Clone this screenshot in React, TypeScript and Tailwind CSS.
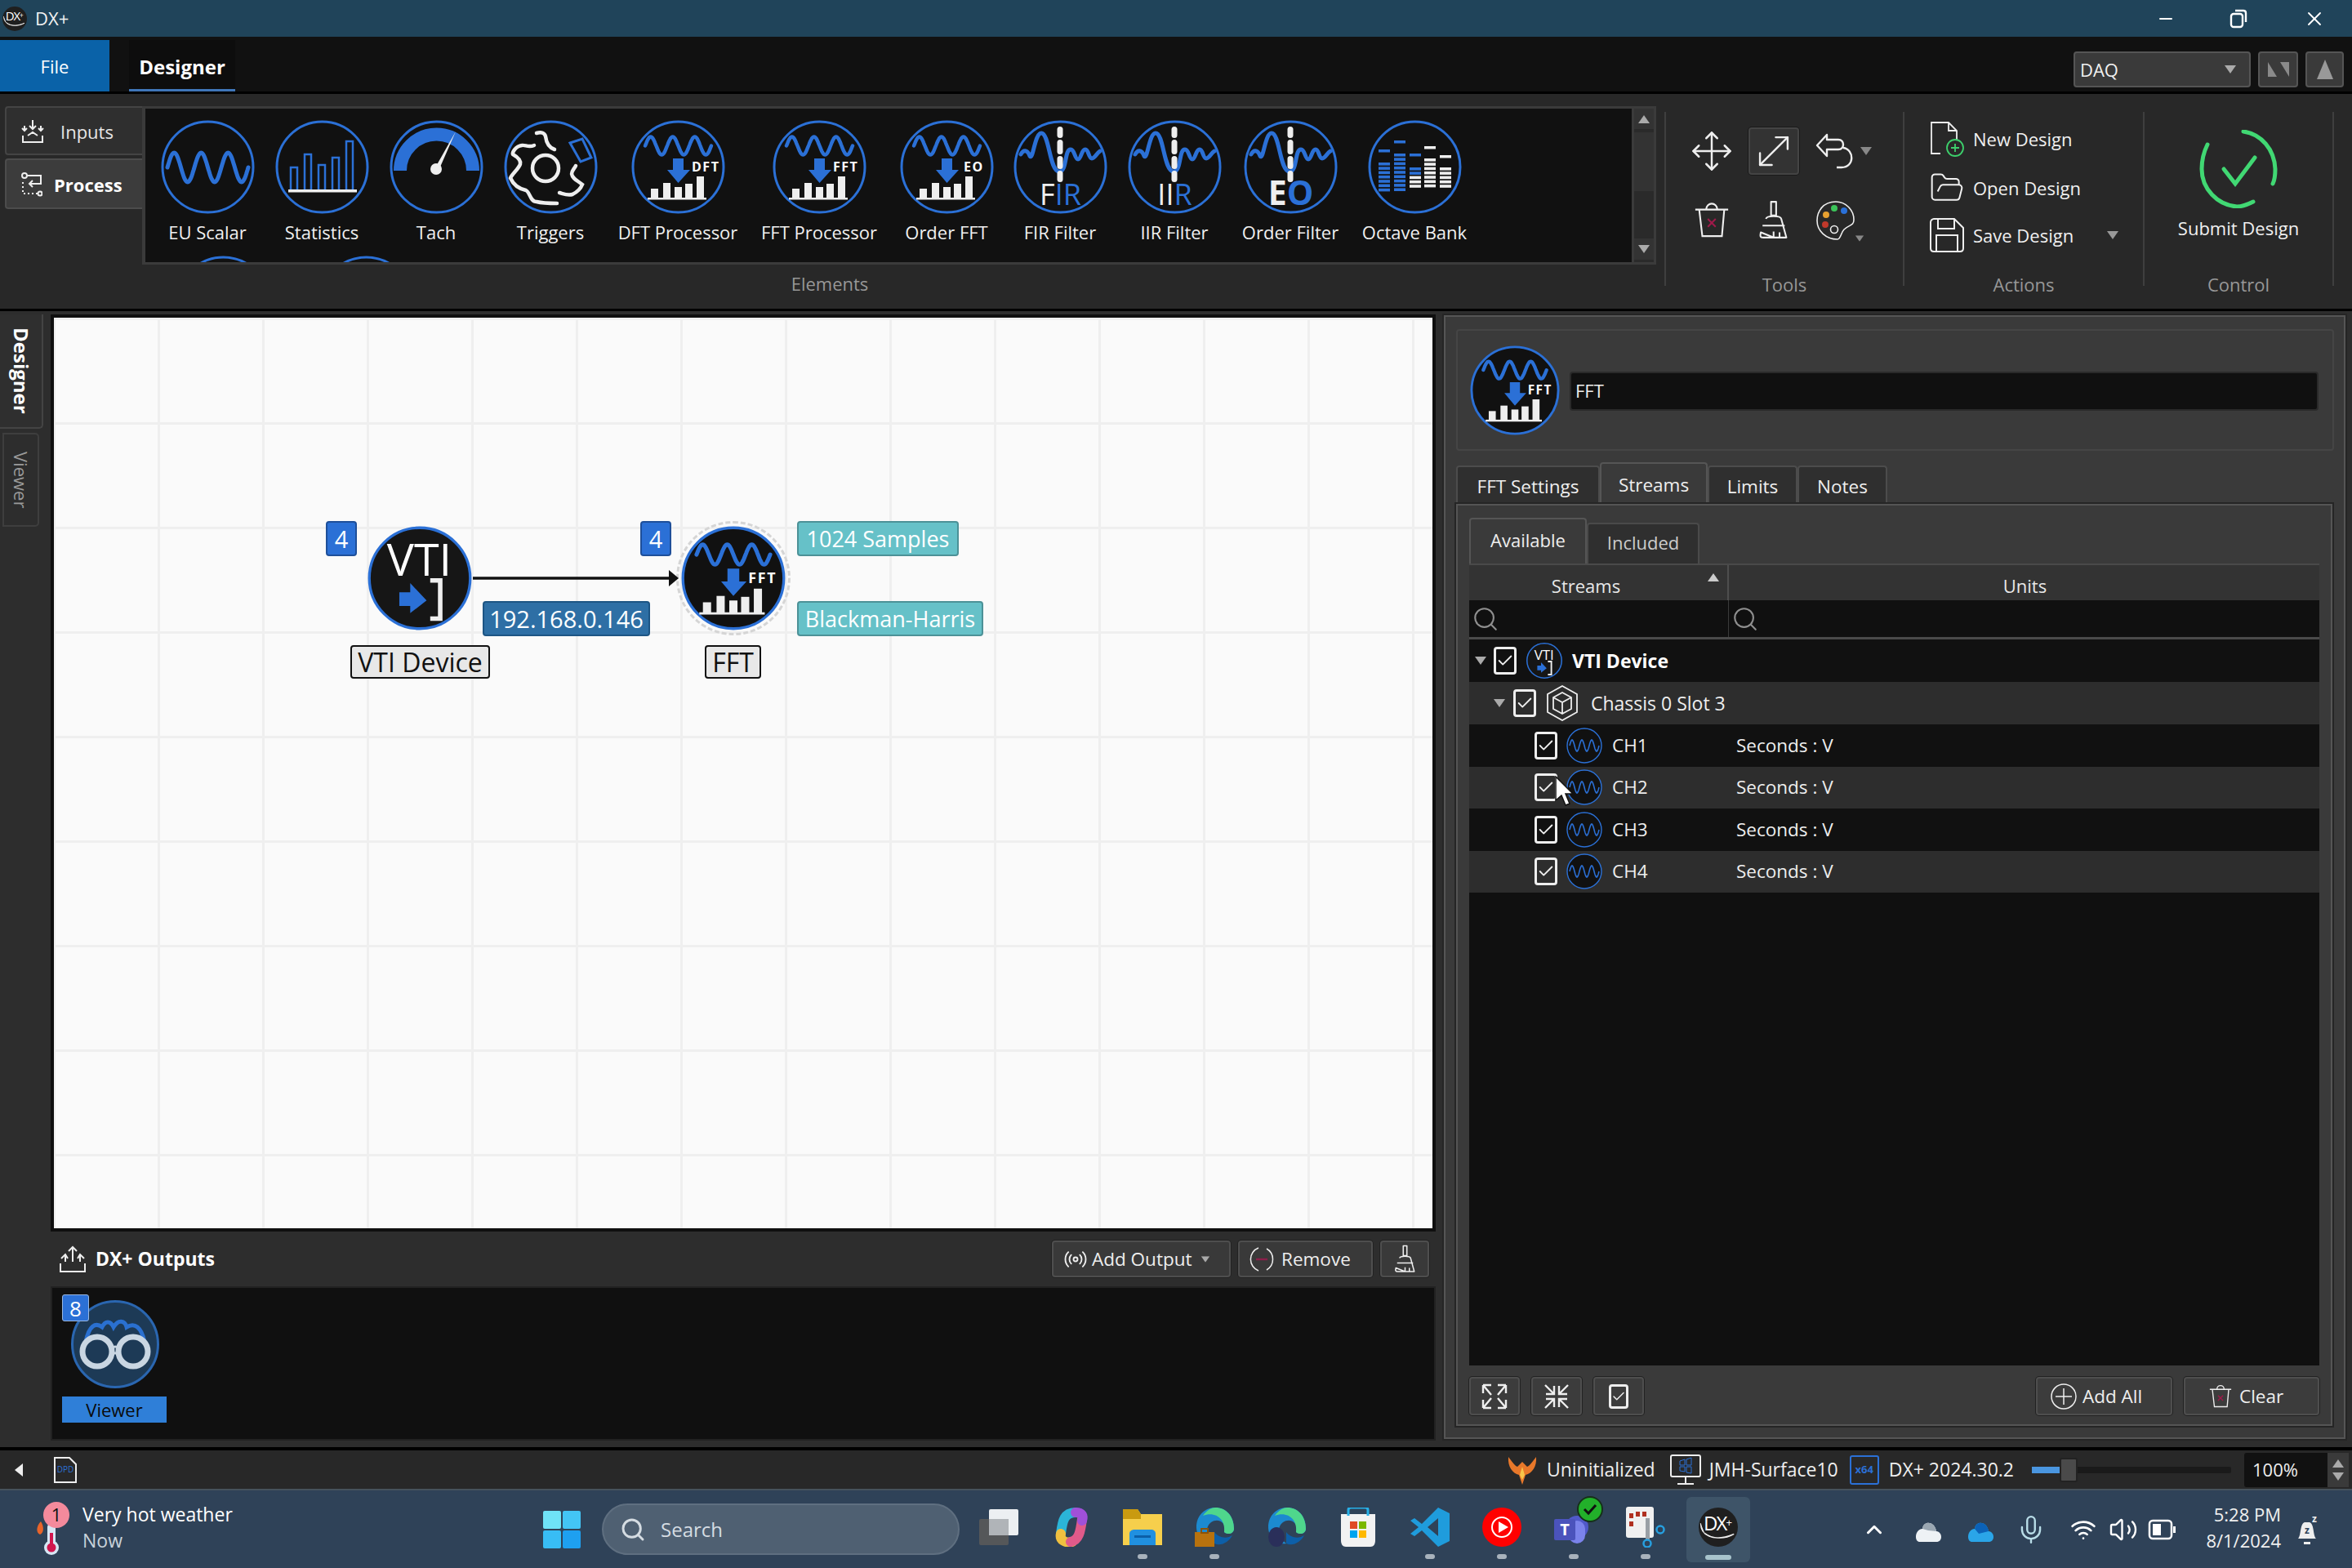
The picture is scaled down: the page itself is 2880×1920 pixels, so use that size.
import { Search, Move, MoveDiagonal, FolderOpen, ChevronUp, Mic, Wifi, Volume2, Radio, Check, X, Minus } from "lucide-react";

const BLUE = "#2b70d6";

const sine = (x0: number, x1: number, cy: number, a: number, n: number) => {
  let d = "";
  for (let i = 0; i <= 120; i++) {
    const t = i / 120;
    const x = x0 + (x1 - x0) * t;
    const y = cy - a * Math.sin(t * n * Math.PI * 2);
    d += `${i ? "L" : "M"}${x.toFixed(1)} ${y.toFixed(1)}`;
  }
  return d;
};

function Ring({ size = 115, fill = "#111", children, stroke = 3 }: { size?: number; fill?: string; stroke?: number; children?: React.ReactNode }) {
  return (
    <svg width={size} height={size} viewBox="0 0 115 115" className="shrink-0">
      <circle cx="57.5" cy="57.5" r="55.5" fill={fill} stroke={BLUE} strokeWidth={stroke} />
      {children}
    </svg>
  );
}

function ScalarIcon() {
  return (
    <Ring>
      <path d={sine(8, 107, 58, 18, 3)} fill="none" stroke={BLUE} strokeWidth="5" strokeLinecap="round" />
    </Ring>
  );
}

function StatsIcon() {
  const bars = [[19, 58], [36, 42], [53, 55], [70, 46], [87, 26]];
  return (
    <Ring>
      {bars.map(([x, y]) => (
        <rect key={x} x={x} y={y} width="8" height={86 - y} fill="none" stroke={BLUE} strokeWidth="2.5" />
      ))}
      <rect x="16" y="85" width="84" height="3.5" fill="#eee" />
    </Ring>
  );
}

function TachIcon() {
  return (
    <Ring>
      <path d="M13 62 A44.5 44.5 0 0 1 102 62" fill="none" stroke={BLUE} strokeWidth="16" />
      <path d="M55 60 L81 14 L60 62 Z" fill="#eee" />
      <circle cx="57" cy="60" r="7" fill="#eee" />
    </Ring>
  );
}

function TriggerIcon() {
  return (
    <Ring>
      <g fill="none" stroke="#eee" strokeWidth="4.5" strokeLinecap="round">
        <circle cx="51" cy="59" r="16" />
        <path d="M40 16 C46 14 50 16 51 20 C52 28 56 34 62 36" />
        <path d="M37 31 C30 34 26 30 22 31 C14 32 10 40 11 42 C18 46 21 50 20 54 C18 60 10 66 8 71 C12 80 18 84 27 86 C32 88 32 100 40 100 C48 102 56 102 65 102" />
        <path d="M68 89 C72 90 78 93 84 91 C90 88 94 84 96 79 C90 74 84 72 83 66 C83 62 86 60 88 56" />
      </g>
      <path d="M81 28 L96 23 L107 46 L94 51 Z" fill="none" stroke={BLUE} strokeWidth="3" />
    </Ring>
  );
}

function ProcIcon({ tag, size }: { tag: string; size?: number }) {
  return (
    <Ring size={size}>
      <path d={sine(17, 98, 31.5, 11, 3)} fill="none" stroke={BLUE} strokeWidth="4.5" strokeLinecap="round" />
      <path d="M51 47 H64 V61 H72 L57.5 77 L44 61 H51 Z" fill={BLUE} />
      {[[24, 84], [39, 77], [53, 82], [66, 78], [80, 69]].map(([x, y]) => (
        <rect key={x} x={x} y={y} width="9" height={96 - y} fill="#eee" />
      ))}
      <rect x="20" y="95" width="72" height="2.5" fill="#eee" />
      <text x={tag.length > 2 ? 74 : 78} y="63" fill="#fff" fontSize="16" fontWeight="700" fontFamily="Open Sans, sans-serif" letterSpacing="1.5">
        {tag}
      </text>
    </Ring>
  );
}

function FilterIcon({ tag }: { tag: "FIR" | "IIR" | "EO" }) {
  return (
    <Ring>
      <path
        d="M9 42 C12 36 17 36 20 44 C24 50 26 16 34 16 C44 16 44 63 56 63 C66 63 62 36 70 36 C75 36 75 48 79 48 C83 48 83 36 88 36 C92 36 92 47 96 47 C100 47 102 40 106 38"
        fill="none"
        stroke={BLUE}
        strokeWidth="5"
        strokeLinecap="round"
      />
      {[[8, 14], [24, 18], [44, 16], [62, 14]].map(([y, h]) => (
        <rect key={y} x="53.5" y={y} width="7" height={h} rx="3.5" fill="#eee" />
      ))}
      <text x="57.5" y="104" textAnchor="middle" fontSize={tag === "EO" ? 41 : 36} fontWeight={tag === "EO" ? 700 : 500} fontFamily="Open Sans, sans-serif">
        {tag === "FIR" && <><tspan fill="#eee">F</tspan><tspan fill={BLUE}>IR</tspan></>}
        {tag === "IIR" && <><tspan fill="#eee">II</tspan><tspan fill={BLUE}>R</tspan></>}
        {tag === "EO" && <><tspan fill="#eee">E</tspan><tspan fill={BLUE}>O</tspan></>}
      </text>
    </Ring>
  );
}

function OctaveIcon() {
  const cols = [
    { x: 13, top: 52, cap: 36, n: 7, c: BLUE, split: 99 },
    { x: 32, top: 41, cap: 25, n: 9, c: BLUE, split: 99 },
    { x: 51, top: 58, cap: 41, n: 5, c: BLUE, split: 2 },
    { x: 69, top: 47, cap: 32, n: 7, c: "#eee", split: 99 },
    { x: 88, top: 58, cap: 43, n: 5, c: "#eee", split: 99 },
  ];
  return (
    <Ring>
      {cols.map((col) => (
        <g key={col.x}>
          <rect x={col.x} y={col.cap} width="14" height="3.5" fill={col.c} />
          {Array.from({ length: col.n }, (_, i) => (
            <rect key={i} x={col.x} y={col.top + i * 5.3} width="14" height="3.6" fill={i >= col.split ? "#eee" : col.c} />
          ))}
        </g>
      ))}
    </Ring>
  );
}

function VtiIcon({ size = 128, fontSize = 50, stroke = 3 }: { size?: number; fontSize?: number; stroke?: number }) {
  return (
    <Ring size={size} fill="#161616" stroke={stroke}>
      <text x="57" y="55" textAnchor="middle" fill="#fff" fontSize={fontSize} fontWeight="400" fontFamily="Open Sans, sans-serif">VTI</text>
      <path d="M35 73 H47 V63 L65 82 L47 96 V88 H35 Z" fill={BLUE} />
      <path d="M69 60 H80 V102 H69" fill="none" stroke="#eee" strokeWidth="5" />
    </Ring>
  );
}

function Broom({ size = 48 }: { size?: number }) {
  return (
    <svg width={size * 0.75} height={size} viewBox="0 0 36 48" fill="none" stroke="#eee" strokeWidth="2">
      <path d="M15 2 H21 V18 H15 Z M9 22 C10 18 26 18 27 22 L33 44 H25 V38 M25 44 H18 V37 M18 44 H6 C2 44 2 42 3 38 Z M5 30 H31" strokeLinejoin="round" />
    </svg>
  );
}

function Trash({ size = 48 }: { size?: number }) {
  return (
    <svg width={size} height={size} viewBox="0 0 48 48" fill="none" stroke="#eee" strokeWidth="2.2">
      <path d="M3 10 H45 M8 10 L12 44 H37 L40 10 M17 10 C17 0 31 0 31 10" />
      <path d="M19 22 L29 32 M29 22 L19 32" stroke="#a01a4a" />
    </svg>
  );
}

function Box({ size = 28 }: { size?: number }) {
  return (
    <span className="flex shrink-0 items-center justify-center rounded-[4px] border-[3px] border-[#eee] bg-transparent" style={{ width: size, height: size + 6 }}>
      <Check size={size - 6} strokeWidth={2} color="#eee" />
    </span>
  );
}

function Tri({ dir = "down", className = "" }: { dir?: "down" | "up" | "left"; className?: string }) {
  const pts = dir === "down" ? "0,0 14,0 7,10" : dir === "up" ? "0,10 14,10 7,0" : "10,0 10,16 0,8";
  return (
    <svg width="14" height="10" viewBox={dir === "left" ? "0 0 10 16" : "0 0 14 10"} className={`shrink-0 ${className}`}>
      <polygon points={pts} fill="currentColor" />
    </svg>
  );
}

function Logo({ size = 30 }: { size?: number }) {
  return (
    <svg width={size} height={size} viewBox="0 0 40 40" className="shrink-0">
      <circle cx="20" cy="20" r="20" fill="#1f1f1f" />
      <text x="5" y="23" fontSize="20" letterSpacing="-1.5" fill="#fff" fontFamily="Open Sans, sans-serif">DX</text>
      <text x="28" y="19" fontSize="11" fill="#fff" fontFamily="Open Sans, sans-serif">+</text>
      <path d="M2 16 C2 28 14 36 36 27 C26 33 14 32 6 26" fill="#eee" stroke="#eee" strokeWidth="1" />
    </svg>
  );
}

const elements = [
  { label: "EU Scalar", w: "w-[140px]", icon: <ScalarIcon /> },
  { label: "Statistics", w: "w-[140px]", icon: <StatsIcon /> },
  { label: "Tach", w: "w-[140px]", icon: <TachIcon /> },
  { label: "Triggers", w: "w-[140px]", icon: <TriggerIcon /> },
  { label: "DFT Processor", w: "w-[172px]", icon: <ProcIcon tag="DFT" /> },
  { label: "FFT Processor", w: "w-[174px]", icon: <ProcIcon tag="FFT" /> },
  { label: "Order FFT", w: "w-[138px]", icon: <ProcIcon tag="EO" /> },
  { label: "FIR Filter", w: "w-[140px]", icon: <FilterIcon tag="FIR" /> },
  { label: "IIR Filter", w: "w-[140px]", icon: <FilterIcon tag="IIR" /> },
  { label: "Order Filter", w: "w-[144px]", icon: <FilterIcon tag="EO" /> },
  { label: "Octave Bank", w: "w-[160px]", icon: <OctaveIcon /> },
];

function TitleBar() {
  return (
    <div className="flex h-[45px] shrink-0 items-center bg-[#20445a] pl-[3px] text-[22px] text-[#f2f2f2]">
      <Logo />
      <span className="ml-[10px]">DX+</span>
      <div className="ml-auto flex items-center pr-[32px] text-white">
        <Minus size={24} strokeWidth={2} />
        <svg className="ml-[66px]" width="22" height="24" viewBox="0 0 22 24" fill="none" stroke="#fff" strokeWidth="2.4">
          <rect x="2" y="6" width="14" height="16" rx="3" />
          <path d="M7 2 H17 C19 2 20 3 20 5 V16" />
        </svg>
        <X className="ml-[68px]" size={28} strokeWidth={1.6} />
      </div>
    </div>
  );
}

function MenuBar() {
  return (
    <div className="flex h-[70px] shrink-0 border-b-[3px] border-black bg-[#111] text-[22px]">
      <div className="mt-[4px] flex w-[134px] items-center justify-center bg-[#0a62a8] pt-[2px] text-white">File</div>
      <div className="ml-[24px] mt-[4px] flex w-[130px] items-center justify-center border-b-[3px] border-[#3f76b8] bg-[#0d0d0d] pt-[5px] text-[24px] font-bold text-white">Designer</div>
      <div className="ml-auto flex items-start pt-[18px]">
        <div className="flex h-[44px] w-[217px] items-center justify-between rounded-[4px] border-2 border-[#555] bg-[#3a3a3a] pl-[6px] pr-[16px] text-[#f0f0f0]">
          DAQ
          <Tri className="text-[#aaa]" />
        </div>
        <div className="ml-[9px] flex h-[44px] w-[49px] items-center justify-center rounded-[4px] border-2 border-[#555] bg-[#3a3a3a]">
          <svg width="26" height="18" viewBox="0 0 26 18"><path d="M0 0 L11 18 H0 Z M26 0 L15 0 L26 18 Z" fill="#8a8a8a" /></svg>
        </div>
        <div className="ml-[9px] mr-[10px] flex h-[44px] w-[47px] items-center justify-center rounded-[4px] border-2 border-[#555] bg-[#3a3a3a]">
          <svg width="20" height="24" viewBox="0 0 20 24"><path d="M10 0 L20 24 H0 Z" fill="#999" /></svg>
        </div>
      </div>
    </div>
  );
}

function RibbonGroup({ label, className, children }: { label: string; className: string; children: React.ReactNode }) {
  return (
    <div className={`mt-[22px] flex h-[213px] flex-col border-l-2 border-[#3f3f3f] ${className}`}>
      <div className="flex-1">{children}</div>
      <div className="-mb-[12px] h-[28px] text-center text-[22px] leading-[28px] text-[#979797]">{label}</div>
    </div>
  );
}

function ActionRow({ icon, label }: { icon: React.ReactNode; label: string }) {
  return (
    <div className="flex h-[60px] items-center gap-[10px] pl-[30px] text-[22px] text-[#f0f0f0]">
      <span className="flex w-[44px] justify-center">{icon}</span>
      {label}
    </div>
  );
}

function Ribbon() {
  return (
    <div className="flex h-[263px] shrink-0 bg-[#282828]">
      <div className="flex w-[174px] shrink-0 flex-col pl-[6px] pt-[15px] text-[22px]">
        <div className="flex h-[60px] items-center gap-[20px] rounded-l-[4px] border-2 border-r-0 border-[#444] bg-[#2f2f2f] pl-[18px] pt-[2px] text-[#e6e6e6]">
          <svg width="28" height="30" viewBox="0 0 28 30" fill="none" stroke="#eee" strokeWidth="2">
            <path d="M14 1 V12 M10 8 L14 12 L18 8 M4 8 V14 M1 11 L4 14 L7 11 M24 8 V14 M21 11 L24 14 L27 11 M2 20 V28 H26 V20 M8 20 L14 16 L20 20" />
          </svg>
          Inputs
        </div>
        <div className="mt-[4px] flex h-[62px] items-center gap-[14px] rounded-l-[4px] border-2 border-r-0 border-[#4c4c4c] bg-[#3c3c3c] pl-[18px] pt-[2px] font-bold text-white">
          <svg width="26" height="30" viewBox="0 0 26 30" fill="none" stroke="#eee" strokeWidth="2">
            <path d="M6 4 H24 V14 H10 M14 10 L10 14 L14 18" />
            <circle cx="4" cy="4" r="3" />
            <path d="M2 12 V26 H20" strokeDasharray="2 3" />
            <circle cx="23" cy="26" r="2.5" />
          </svg>
          Process
        </div>
      </div>
      <div className="flex w-[1854px] shrink-0 flex-col pt-[15px]">
        <div className="flex h-[194px] border-y-[3px] border-[#3b3b3b]">
          <div className="w-[1824px] shrink-0 overflow-hidden border-l-[4px] border-[#3b3b3b] bg-[#111] pl-[6px] pt-[14px]">
            <div className="flex h-[166px]">
              {elements.map((el) => (
                <div key={el.label} className={`flex shrink-0 flex-col items-center ${el.w}`}>
                  {el.icon}
                  <span className="mt-[7px] text-[22px] leading-[30px] text-[#f0f0f0]">{el.label}</span>
                </div>
              ))}
            </div>
            <div className="ml-[32px] flex gap-[60px]">
              <ScalarIcon />
              <ScalarIcon />
            </div>
          </div>
          <div className="flex flex-1 flex-col items-center border-x-[3px] border-[#3b3b3b] bg-[#2a2a2a] pb-[3px] text-[#aaa]">
            <div className="flex h-[25px] w-full items-center justify-center bg-[#333]"><Tri dir="up" /></div>
            <div className="mt-[4px] h-[72px] w-full bg-[#333]" />
            <div className="mt-auto flex h-[26px] w-full items-center justify-center bg-[#333]"><Tri /></div>
          </div>
        </div>
        <div className="w-[1684px] pt-[7px] text-center text-[22px] text-[#979797]">Elements</div>
      </div>
      <div className="w-[10px] shrink-0" />
      <RibbonGroup label="Tools" className="w-[292px]">
        <div className="grid grid-cols-[76px_76px_76px] grid-rows-[85px_85px] pl-[18px] pt-[5px] text-[#eee]">
          <div className="flex items-center justify-center"><Move size={54} strokeWidth={1.1} /></div>
          <div className="flex items-center justify-center">
            <div className="flex h-[58px] w-[62px] items-center justify-center rounded-[4px] border-2 border-[#444] bg-[#333] shadow-[0_0_0_1px_#1a1a1a]">
              <MoveDiagonal size={60} strokeWidth={1} />
            </div>
          </div>
          <div className="relative flex items-center justify-center">
            <svg width="50" height="48" viewBox="0 0 50 48" fill="none" stroke="#eee" strokeWidth="2.4">
              <path d="M14 4 L2 17 L14 30 V22 H28 C36 22 36 10 28 10 H14 Z M26 44 H32 C48 44 48 22 34 20" strokeLinejoin="round" />
            </svg>
            <Tri className="absolute right-[-6px] top-[38px] text-[#888]" />
          </div>
          <div className="flex items-center justify-center"><Trash size={46} /></div>
          <div className="flex items-center justify-center"><Broom size={50} /></div>
          <div className="relative flex items-center justify-center">
            <svg width="48" height="50" viewBox="0 0 48 50" fill="none" stroke="#eee" strokeWidth="1.6">
              <path d="M24 2 C8 2 1 14 1 25 C1 38 12 48 26 48 C30 48 30 40 34 36 C40 30 46 32 46 24 C46 12 36 2 24 2 Z" />
              <circle cx="22" cy="36" r="4.5" />
              <circle cx="12" cy="18" r="4" fill="#e7a030" stroke="none" />
              <circle cx="22" cy="10" r="4" fill="#3cc45a" stroke="none" />
              <circle cx="34" cy="13" r="4" fill="#2a70d8" stroke="none" />
              <circle cx="11" cy="30" r="4" fill="#c0392b" stroke="none" />
            </svg>
            <Tri className="absolute right-[2px] top-[60px] scale-75 text-[#888]" />
          </div>
        </div>
      </RibbonGroup>
      <RibbonGroup label="Actions" className="w-[294px]">
        <div className="pt-[3px]">
          <ActionRow
            label="New Design"
            icon={
              <svg width="44" height="44" viewBox="0 0 44 44" fill="none" stroke="#eee" strokeWidth="1.8">
                <path d="M14 40 H3 V2 H24 L34 12 V24 M24 2 V12 H34" />
                <circle cx="32" cy="33" r="10" stroke="#3dd06c" />
                <path d="M32 28 V38 M27 33 H37" stroke="#3dd06c" />
              </svg>
            }
          />
          <ActionRow label="Open Design" icon={<FolderOpen size={46} strokeWidth={1.1} />} />
          <div className="-mt-[2px] flex items-center pr-[30px]">
            <div className="flex-1">
              <ActionRow
                label="Save Design"
                icon={
                  <svg width="42" height="42" viewBox="0 0 42 42" fill="none" stroke="#eee" strokeWidth="2">
                    <path d="M5 1 H30 L41 12 V37 C41 40 39 41 37 41 H5 C3 41 1 40 1 37 V5 C1 3 3 1 5 1 Z M10 1 V13 H30 V1 M8 41 V21 H34 V41" />
                  </svg>
                }
              />
            </div>
            <Tri className="text-[#999]" />
          </div>
        </div>
      </RibbonGroup>
      <RibbonGroup label="Control" className="w-[234px] border-r-2">
        <div className="flex flex-col items-center pt-[22px] text-[22px] text-[#f0f0f0]">
          <svg width="96" height="96" viewBox="0 0 96 96" fill="none" stroke="#41d873" strokeWidth="5" strokeLinecap="round">
            <path d="M54 2 C76 5 92 24 93 48 C93 56 92 62 90 66 M66 88 C58 92 52 94 46 94 C22 92 3 72 3 48 C3 36 6 26 10 18" />
            <path d="M30 48 L44 66 L68 34" />
          </svg>
          <span className="mt-[8px]">Submit Design</span>
        </div>
      </RibbonGroup>
    </div>
  );
}

function SideRail() {
  return (
    <div className="flex w-[62px] shrink-0 flex-col items-start">
      <div className="flex h-[140px] w-[53px] items-center justify-center rounded-br-[5px] border-2 border-l-0 border-t-0 border-[#444] bg-[#2f2f2f] text-[24px] font-bold text-white [writing-mode:vertical-rl]">Designer</div>
      <div className="ml-[3px] mt-[5px] flex h-[115px] w-[45px] items-center justify-center rounded-r-[5px] border-2 border-[#3e3e3e] text-[22px] text-[#9a9a9a] [writing-mode:vertical-rl]">Viewer</div>
    </div>
  );
}

function Tag({ className, children }: { className: string; children: React.ReactNode }) {
  return <div className={`absolute flex items-center justify-center rounded-[4px] border-2 leading-none ${className}`}>{children}</div>;
}

function Canvas() {
  return (
    <div className="relative h-[1123px] shrink-0 border-[4px] border-[#0f0f0f] bg-[#fafafa] bg-[linear-gradient(#efefef_3px,transparent_3px),linear-gradient(90deg,#efefef_3px,transparent_3px)] bg-[length:128px_128px] bg-[position:-1px_0px]">
      <Tag className="left-[333px] top-[249px] h-[43px] w-[38px] border-[#1e4f9a] bg-[#2b70d6] text-[29px] text-white">4</Tag>
      <Tag className="left-[718px] top-[249px] h-[43px] w-[38px] border-[#1e4f9a] bg-[#2b70d6] text-[29px] text-white">4</Tag>
      <div className="absolute left-[384px] top-[255px]"><VtiIcon /></div>
      <div className="absolute left-[762px] top-[249px] h-[140px] w-[140px] rounded-full border-[3px] border-dashed border-[#d5d5d5]" />
      <div className="absolute left-[768px] top-[255px]"><ProcIcon tag="FFT" size={128} /></div>
      <svg className="absolute left-[513px] top-[307px]" width="252" height="24" viewBox="0 0 252 24">
        <path d="M0 12 H240" stroke="#111" strokeWidth="3.5" />
        <path d="M240 2 L252 12 L240 22 Z" fill="#111" />
      </svg>
      <Tag className="left-[525px] top-[347px] h-[43px] w-[205px] border-[#1d5584] bg-[#2e6fa5] text-[29px] text-white">192.168.0.146</Tag>
      <Tag className="left-[910px] top-[249px] h-[43px] w-[198px] border-[#4c9197] bg-[#66c1c8] text-[27px] text-white">1024 Samples</Tag>
      <Tag className="left-[910px] top-[347px] h-[43px] w-[228px] border-[#4c9197] bg-[#66c1c8] text-[27px] text-white">Blackman-Harris</Tag>
      <Tag className="left-[363px] top-[401px] h-[41px] w-[171px] border-[#111] bg-[#e8e8e8] text-[32px] text-[#111]">VTI Device</Tag>
      <Tag className="left-[797px] top-[401px] h-[41px] w-[69px] border-[#111] bg-[#e8e8e8] text-[32px] text-[#111]">FFT</Tag>
    </div>
  );
}

function OutButton({ className, children }: { className: string; children: React.ReactNode }) {
  return <div className={`flex h-[45px] items-center rounded-[4px] border-2 border-[#4e4e4e] bg-[#393939] pt-[1px] text-[22.5px] text-[#eee] shadow-[0_0_0_1px_#222] ${className}`}>{children}</div>;
}

function Outputs() {
  return (
    <div className="flex flex-1 flex-col">
      <div className="flex h-[67px] shrink-0 items-center pl-[10px] pr-[8px]">
        <svg width="34" height="34" viewBox="0 0 34 34" fill="none" stroke="#eee" strokeWidth="2">
          <path d="M17 2 V20 M12 7 L17 2 L22 7 M3 16 L8 11 L11 16 M8 11 V20 M31 16 L26 11 L23 16 M26 11 V20 M2 22 V32 H32 V22" />
        </svg>
        <span className="ml-[11px] text-[23px] font-bold text-white">DX+ Outputs</span>
        <div className="ml-auto flex gap-[9px]">
          <OutButton className="w-[219px] gap-[5px] pl-[12px]">
            <Radio size={30} strokeWidth={1.5} />
            Add Output
            <Tri className="ml-[4px] scale-75 text-[#aaa]" />
          </OutButton>
          <OutButton className="w-[165px] gap-[8px] pl-[11px]">
            <svg width="32" height="32" viewBox="0 0 32 32" fill="none" stroke="#eee" strokeWidth="1.5">
              <path d="M22 3 A15 15 0 0 1 22 29 M12 30 A15 15 0 0 1 12 2" />
              <path d="M9 16 H23" stroke="#8a1f4a" strokeWidth="2.5" />
            </svg>
            Remove
          </OutButton>
          <OutButton className="w-[60px] justify-center"><Broom size={36} /></OutButton>
        </div>
      </div>
      <div className="relative h-[189px] shrink-0 border-2 border-[#222] bg-[#101010]">
        <div className="absolute left-[23px] top-[15px] flex h-[108px] w-[108px] items-center justify-center rounded-full border-[3px] border-[#2a66b0] bg-[#1d3a56]">
          <svg width="92" height="70" viewBox="0 0 92 70" fill="none">
            <path d="M10 32 C14 12 22 8 30 14 C34 6 40 6 44 14 C50 4 58 6 60 14 C70 8 78 14 82 32" stroke="#2a70d0" strokeWidth="5" />
            <circle cx="24" cy="44" r="18" stroke="#c9d6e2" strokeWidth="7" />
            <circle cx="68" cy="44" r="18" stroke="#c9d6e2" strokeWidth="7" />
            <circle cx="46" cy="42" r="4" stroke="#c9d6e2" strokeWidth="3" />
          </svg>
        </div>
        <div className="absolute left-[12px] top-[8px] flex h-[33px] w-[33px] items-center justify-center rounded-[3px] border border-[#9ab7e0] bg-[#2b70d6] text-[26px] leading-none text-white">8</div>
        <div className="absolute left-[12px] top-[133px] flex h-[32px] w-[128px] items-center justify-center bg-[#2f7fd8] text-[22px] text-[#0a0a0a]">Viewer</div>
      </div>
    </div>
  );
}

const streamRows = ["CH1", "CH2", "CH3", "CH4"];

function SmallWave() {
  return (
    <svg width="44" height="44" viewBox="0 0 44 44" className="shrink-0">
      <circle cx="22" cy="22" r="21" fill="#111" stroke={BLUE} strokeWidth="1.4" />
      <path d={sine(4, 40, 22, 7, 3)} fill="none" stroke={BLUE} strokeWidth="1.6" />
    </svg>
  );
}

function StreamsTable() {
  return (
    <div className="flex h-[982px] w-[1041px] flex-col bg-[#101010]">
      <div className="flex h-[45px] shrink-0 items-center border-t-2 border-[#4a4a4a] bg-[#333] pt-[8px] text-[22px] text-[#e8e8e8]">
        <div className="relative -mt-[8px] flex h-[43px] w-[318px] items-center justify-center border-r-2 border-[#4e4e4e] pr-[30px] pt-[8px]">
          Streams
          <Tri dir="up" className="absolute right-[10px] top-[10px] text-[#ccc]" />
        </div>
        <div className="flex-1 pl-[2px] text-center">Units</div>
      </div>
      <div className="flex h-[48px] shrink-0 border-b-[3px] border-[#4a4a4a] text-[#8f8f8f]">
        <div className="flex w-[318px] items-center border-r border-[#3a3a3a] pl-[3px]"><Search size={34} strokeWidth={1.5} /></div>
        <div className="flex items-center pl-[3px]"><Search size={34} strokeWidth={1.5} /></div>
      </div>
      <div className="flex h-[52px] shrink-0 items-center bg-[#111] pl-[7px] text-[23px] font-bold text-white">
        <Tri className="text-[#aaa]" />
        <span className="ml-[9px]"><Box /></span>
        <span className="ml-[12px]"><VtiIcon size={44} fontSize={44} stroke={4} /></span>
        <span className="ml-[12px]">VTI Device</span>
      </div>
      <div className="flex h-[52px] shrink-0 items-center bg-[#2d2d2d] pl-[30px] text-[23px] text-[#eee]">
        <Tri className="text-[#aaa]" />
        <span className="ml-[10px]"><Box /></span>
        <svg className="ml-[12px]" width="40" height="44" viewBox="0 0 40 44" fill="none" stroke="#eee" strokeWidth="1.8">
          <path d="M20 1 L38 11 V33 L20 43 L2 33 V11 Z" />
          <path d="M20 9 L31 15 V29 L20 35 L9 29 V15 Z M9 15 L20 21 L31 15 M20 21 V35" />
        </svg>
        <span className="ml-[15px]">Chassis 0 Slot 3</span>
      </div>
      {streamRows.map((name, i) => (
        <div key={name} className={`flex h-[51.5px] shrink-0 items-center text-[22.5px] text-[#eee] ${i % 2 ? "bg-[#2d2d2d]" : "bg-[#111]"}`}>
          <span className="ml-[80px]"><Box /></span>
          <span className="ml-[11px]"><SmallWave /></span>
          <span className="ml-[12px] w-[152px]">{name}</span>
          <span>Seconds : V</span>
        </div>
      ))}
    </div>
  );
}

function PanelButton({ className, children }: { className: string; children: React.ReactNode }) {
  return <div className={`flex h-[47px] items-center justify-center rounded-[4px] border-2 border-[#4e4e4e] bg-[#3c3c3c] text-[22.5px] text-[#eee] shadow-[0_0_0_1px_#222] ${className}`}>{children}</div>;
}

function SidePanel() {
  const corners = "M4 4 L14 16 M4 4 V14 M4 4 H14";
  return (
    <div className="relative ml-[10px] mt-[1px] flex h-[1376px] w-[1104px] shrink-0 flex-col border-2 border-[#555] bg-[#3a3a3a] pl-[13px] shadow-[0_0_0_2px_#252525]">
      <div className="mt-[15px] flex h-[149px] w-[1075px] shrink-0 items-center rounded-[4px] border-2 border-[#454545] pl-[15px]">
        <ProcIcon tag="FFT" size={110} />
        <div className="ml-[12px] mt-[2px] flex h-[48px] w-[917px] items-center rounded-[4px] border-2 border-[#2a2a2a] bg-[#101010] pl-[5px] text-[22px] text-[#eee]">FFT</div>
      </div>
      <div className="mt-[14px] flex h-[51px] shrink-0 items-end text-[22.5px] text-[#eee]">
        <div className="flex h-[47px] w-[176px] items-center justify-center rounded-t-[4px] border-2 border-b-0 border-[#4c4c4c] bg-[#2f2f2f] pt-[2px]">FFT Settings</div>
        <div className="flex h-[51px] w-[132px] items-center justify-center rounded-t-[4px] border-2 border-b-0 border-[#555] bg-[#3a3a3a] pt-[2px]">Streams</div>
        <div className="flex h-[47px] w-[110px] items-center justify-center rounded-t-[4px] border-2 border-b-0 border-[#4c4c4c] bg-[#2f2f2f] pt-[2px]">Limits</div>
        <div className="flex h-[47px] w-[110px] items-center justify-center rounded-t-[4px] border-2 border-b-0 border-[#4c4c4c] bg-[#2f2f2f] pt-[2px]">Notes</div>
      </div>
      <div className="flex h-[1129px] w-[1073px] flex-col border-2 border-[#555] pl-[14px] pt-[15px] shadow-[0_0_0_2px_#252525]">
        <div className="flex h-[56px] shrink-0 items-end text-[22px]">
          <div className="flex h-[56px] w-[144px] items-center justify-center rounded-t-[4px] border-2 border-b-0 border-[#555] pb-[3px] text-[#eee]">Available</div>
          <div className="flex h-[50px] w-[138px] items-center justify-center rounded-t-[4px] border-2 border-b-0 border-[#4a4a4a] bg-[#2f2f2f] pb-[3px] text-[#ccc]">Included</div>
        </div>
        <StreamsTable />
        <div className="mt-[14px] flex w-[1041px] gap-[14px]">
          <PanelButton className="w-[62px]">
            <svg width="36" height="36" viewBox="0 0 36 36" fill="none" stroke="#eee" strokeWidth="2.4">
              <path d={corners} />
              <path d={corners} transform="translate(36 0) scale(-1 1)" />
              <path d={corners} transform="translate(0 36) scale(1 -1)" />
              <path d={corners} transform="translate(36 36) scale(-1 -1)" />
            </svg>
          </PanelButton>
          <PanelButton className="w-[62px]">
            <svg width="36" height="36" viewBox="0 0 36 36" fill="none" stroke="#eee" strokeWidth="2.4">
              <path d="M4 4 L15 15 M15 5 V15 H5" />
              <path d="M4 4 L15 15 M15 5 V15 H5" transform="translate(36 0) scale(-1 1)" />
              <path d="M4 4 L15 15 M15 5 V15 H5" transform="translate(0 36) scale(1 -1)" />
              <path d="M4 4 L15 15 M15 5 V15 H5" transform="translate(36 36) scale(-1 -1)" />
            </svg>
          </PanelButton>
          <PanelButton className="w-[62px]"><Box size={24} /></PanelButton>
          <PanelButton className="ml-auto w-[167px] justify-start gap-[7px] pl-[16px]">
            <svg width="32" height="32" viewBox="0 0 32 32" fill="none" stroke="#eee" strokeWidth="1.5">
              <circle cx="16" cy="16" r="15" />
              <path d="M16 6 V26 M6 16 H26" />
            </svg>
            Add All
          </PanelButton>
          <PanelButton className="w-[166px] justify-start gap-[8px] pl-[28px]"><Trash size={30} />Clear</PanelButton>
        </div>
      </div>
      {/* mouse pointer */}
      <svg className="absolute left-[133px] top-[562px]" width="26" height="38" viewBox="0 0 26 38">
        <path d="M2 1 V30 L9 24 L14 36 L19 34 L14 22 L23 22 Z" fill="#fff" stroke="#111" strokeWidth="1.5" />
      </svg>
    </div>
  );
}

function StatusBar() {
  return (
    <div className="flex h-[53px] shrink-0 items-center border-b-2 border-t-4 border-b-[#46525c] border-t-black bg-[#282828] text-[23px] text-[#eee]">
      <Tri dir="left" className="ml-[18px] h-[16px] w-[10px] text-[#eee]" />
      <svg className="ml-[37px]" width="30" height="34" viewBox="0 0 30 34" fill="none" stroke="#eee" strokeWidth="2">
        <path d="M2 2 H20 L28 10 V32 H2 Z" />
        <text x="15" y="20" textAnchor="middle" fontSize="10" fill="#2b70d6" stroke="none" fontFamily="Open Sans, sans-serif">DPD</text>
      </svg>
      <svg className="ml-auto" width="36" height="36" viewBox="0 0 36 36">
        <path d="M18 36 L14 24 C6 22 0 14 1 2 C6 8 8 12 12 14 L18 8 L24 14 C28 12 30 8 35 2 C36 14 30 22 22 24 Z" fill="#e8782a" />
        <path d="M18 14 L21 24 L18 30 L15 24 Z" fill="#f7c64a" />
      </svg>
      <span className="ml-[12px]">Uninitialized</span>
      <svg className="ml-[18px]" width="38" height="38" viewBox="0 0 38 38" fill="none" stroke="#eee" strokeWidth="2">
        <rect x="1" y="1" width="36" height="26" rx="2" />
        <path d="M19 27 V35 M9 36 H29" />
        <path d="M12 8 L18 6 V13 H12 Z M20 6 L26 4 V13 H20 Z M12 15 H18 V21 L12 20 Z M20 15 H26 V23 L20 22 Z" stroke="#2b70d6" strokeWidth="1" />
      </svg>
      <span className="ml-[10px]">JMH-Surface10</span>
      <div className="ml-[14px] flex h-[36px] w-[36px] items-center justify-center rounded-[3px] border-2 border-[#2b70d6] text-[13px] font-bold text-[#2b70d6]">x64</div>
      <span className="ml-[12px]">DX+ 2024.30.2</span>
      <div className="relative ml-[22px] h-[8px] w-[244px] rounded-[2px] bg-[#1a1a1a]">
        <div className="h-full w-[34px] bg-[#4a96e0]" />
        <div className="absolute left-[34px] top-[-11px] h-[30px] w-[22px] rounded-[3px] border-2 border-[#222] bg-[#4a4a4a]" />
      </div>
      <div className="ml-[16px] mr-[4px] flex h-[42px] w-[128px] items-center rounded-[3px] bg-[#111] text-[22px]">
        <span className="pl-[10px]">100%</span>
        <div className="ml-auto flex h-full w-[26px] flex-col items-center justify-center gap-[6px] bg-[#3a3a3a] text-[#aaa]">
          <Tri dir="up" />
          <Tri />
        </div>
      </div>
    </div>
  );
}

function TaskIcon({ dot, children }: { dot?: boolean; children: React.ReactNode }) {
  return (
    <div className="relative flex h-[95px] w-[88px] shrink-0 items-center justify-center pb-[6px]">
      {children}
      {dot && <span className="absolute bottom-[11px] h-[6px] w-[12px] rounded-full bg-[#a8b2bc]" />}
    </div>
  );
}

function Taskbar() {
  return (
    <div className="flex h-[95px] shrink-0 items-center bg-[#2f4258] text-white">
      <div className="flex w-[665px] shrink-0 items-center pl-[40px]">
        <svg width="48" height="68" viewBox="0 0 48 68">
          <path d="M10 24 C4 30 4 38 9 40 C14 38 14 30 10 24 Z" fill="#e8642a" />
          <rect x="18" y="26" width="10" height="32" rx="5" fill="#d6e6f4" />
          <circle cx="23" cy="56" r="9" fill="#d6e6f4" />
          <circle cx="23" cy="56" r="5.5" fill="#d0164e" />
          <rect x="21" y="38" width="4" height="18" fill="#d0164e" />
          <circle cx="29" cy="16" r="16" fill="#f48a9c" />
          <text x="29" y="24" textAnchor="middle" fontSize="22" fill="#111" fontFamily="Open Sans, sans-serif">1</text>
        </svg>
        <div className="mb-[6px] ml-[13px] flex flex-col text-[23px] leading-[32px]">
          <span>Very hot weather</span>
          <span className="text-[#c9d2da]">Now</span>
        </div>
      </div>
      <svg width="46" height="46" viewBox="0 0 46 46" className="shrink-0">
        <rect x="0" y="0" width="22" height="22" rx="2" fill="#6fe3f7" />
        <rect x="24" y="0" width="22" height="22" rx="2" fill="#43c5f5" />
        <rect x="0" y="24" width="22" height="22" rx="2" fill="#38bdf5" />
        <rect x="24" y="24" width="22" height="22" rx="2" fill="#1ea0f0" />
      </svg>
      <div className="ml-[26px] flex h-[63px] w-[438px] shrink-0 items-center rounded-full border-2 border-[#5f6f80] bg-[#4f6072] pl-[20px] text-[24px] text-[#d5dce2]">
        <Search size={32} strokeWidth={2.2} />
        <span className="ml-[18px]">Search</span>
      </div>
      <div className="ml-[4px] flex shrink-0 items-center">
        <TaskIcon>
          <svg width="48" height="44" viewBox="0 0 48 44">
            <rect x="12" y="0" width="36" height="32" rx="2" fill="#eceff2" />
            <rect x="0" y="12" width="36" height="32" rx="2" fill="#5a5a5a" fillOpacity="0.9" />
            <rect x="12" y="12" width="24" height="20" fill="#b0b4b8" />
          </svg>
        </TaskIcon>
        <TaskIcon>
          <svg width="48" height="48" viewBox="0 0 48 48" fill="none" strokeWidth="12" strokeLinecap="round">
            <path d="M30 6 C16 6 14 16 12 32" stroke="#2bb5d8" />
            <path d="M12 32 C10 40 18 44 26 42" stroke="#f0c040" />
            <path d="M38 14 C36 30 34 40 24 42" stroke="#e05a8a" />
            <path d="M30 6 C38 6 40 10 38 16" stroke="#a050d8" />
          </svg>
        </TaskIcon>
        <TaskIcon dot>
          <svg width="48" height="44" viewBox="0 0 48 44">
            <path d="M0 0 H18 L22 6 H48 V44 H0 Z" fill="#f6cf4c" />
            <path d="M0 0 H18 L22 6 V12 H0 Z" fill="#c99a10" />
            <path d="M8 44 V30 C8 26 12 25 14 25 H34 C38 25 40 27 40 30 V44 Z" fill="#2090e0" />
            <rect x="14" y="32" width="20" height="3" fill="#0b5fa8" />
          </svg>
        </TaskIcon>
        <TaskIcon dot>
          <svg width="48" height="48" viewBox="0 0 48 48">
            <path d="M2 24 C2 10 12 0 25 0 C38 0 48 10 48 26 C48 32 40 34 36 30 C40 18 28 12 20 18 C12 24 14 36 24 44 C12 46 2 36 2 24 Z" fill="#1c8ad0" />
            <path d="M25 0 C38 0 48 10 48 26 C48 32 40 34 36 30 C38 14 25 4 10 10 C14 4 20 0 25 0 Z" fill="#4fd68c" />
            <path d="M24 44 C32 48 42 42 46 34 C40 38 30 38 24 30 Z" fill="#0d5fa8" />
            <rect x="0" y="30" width="24" height="18" fill="#b8720e" />
            <rect x="8" y="26" width="8" height="5" fill="none" stroke="#8a5208" strokeWidth="2" />
          </svg>
        </TaskIcon>
        <TaskIcon>
          <svg width="48" height="48" viewBox="0 0 48 48">
            <path d="M2 24 C2 10 12 0 25 0 C38 0 48 10 48 26 C48 32 40 34 36 30 C40 18 28 12 20 18 C12 24 14 36 24 44 C12 46 2 36 2 24 Z" fill="#1c8ad0" />
            <path d="M25 0 C38 0 48 10 48 26 C48 32 40 34 36 30 C38 14 25 4 10 10 C14 4 20 0 25 0 Z" fill="#4fd68c" />
            <path d="M24 44 C32 48 42 42 46 34 C40 38 30 38 24 30 Z" fill="#0d5fa8" />
            <ellipse cx="12" cy="36" rx="10" ry="12" fill="#2a2f5a" />
          </svg>
        </TaskIcon>
        <TaskIcon>
          <svg width="46" height="48" viewBox="0 0 46 48">
            <path d="M2 8 H44 V40 C44 45 42 48 38 48 H8 C4 48 2 45 2 40 Z" fill="#f2f2f2" />
            <path d="M11 10 V3 C11 1 12 0 14 0 H32 C34 0 35 1 35 3 V10" fill="none" stroke="#27b0e8" strokeWidth="3" />
            <rect x="13" y="17" width="9" height="9" fill="#e04a24" />
            <rect x="24" y="17" width="9" height="9" fill="#7ab800" />
            <rect x="13" y="28" width="9" height="9" fill="#00a4ef" />
            <rect x="24" y="28" width="9" height="9" fill="#ffb900" />
          </svg>
        </TaskIcon>
        <TaskIcon dot>
          <svg width="48" height="48" viewBox="0 0 48 48">
            <path d="M34 0 L48 7 V41 L34 48 L14 28 L5 35 L0 32 L10 24 L0 16 L5 13 L14 20 Z M34 13 L21 24 L34 35 Z" fill="#1f9cdc" />
          </svg>
        </TaskIcon>
        <TaskIcon dot>
          <svg width="48" height="48" viewBox="0 0 48 48">
            <circle cx="24" cy="24" r="24" fill="#f00" />
            <circle cx="24" cy="24" r="12" fill="none" stroke="#fff" strokeWidth="2" />
            <path d="M20 17 L32 24 L20 31 Z" fill="#fff" />
          </svg>
        </TaskIcon>
        <TaskIcon dot>
          <div className="relative">
            <svg width="48" height="48" viewBox="0 0 48 48">
              <circle cx="28" cy="24" r="14" fill="#5059c9" />
              <rect x="18" y="16" width="20" height="28" rx="10" fill="#7b83eb" />
              <rect x="0" y="14" width="26" height="26" rx="2" fill="#4b53bc" />
              <text x="13" y="34" textAnchor="middle" fontSize="20" fontWeight="700" fill="#fff" fontFamily="Open Sans, sans-serif">T</text>
            </svg>
            <svg className="absolute -top-[14px] right-[-12px]" width="32" height="32" viewBox="0 0 32 32">
              <circle cx="16" cy="16" r="15" fill="#22b02a" stroke="#16301a" strokeWidth="2" />
              <path d="M9 16 L14 21 L23 11" fill="none" stroke="#111" strokeWidth="3" />
            </svg>
          </div>
        </TaskIcon>
        <TaskIcon dot>
          <svg width="48" height="50" viewBox="0 0 48 50">
            <rect x="0" y="0" width="34" height="38" rx="3" fill="#f0f0f0" />
            <rect x="4" y="8" width="5" height="6" fill="#b03020" />
            <rect x="4" y="18" width="5" height="6" fill="#b03020" />
            <rect x="12" y="6" width="5" height="6" fill="#b03020" />
            <rect x="20" y="6" width="5" height="6" fill="#b03020" />
            <rect x="24" y="14" width="5" height="26" fill="#9aa0a6" />
            <circle cx="42" cy="28" r="4.5" fill="none" stroke="#27a0e0" strokeWidth="2.5" />
            <circle cx="26" cy="45" r="4.5" fill="none" stroke="#27a0e0" strokeWidth="2.5" />
          </svg>
        </TaskIcon>
        <div className="relative ml-[6px] flex h-[80px] w-[78px] shrink-0 items-center justify-center rounded-[6px] bg-[#3e5468] pb-[6px]">
          <Logo size={48} />
          <span className="absolute bottom-[3px] h-[6px] w-[32px] rounded-full bg-[#a8c4cc]" />
        </div>
      </div>
      <div className="ml-[137px] flex shrink-0 items-center">
        <ChevronUp size={30} strokeWidth={2.4} />
        <svg className="ml-[33px]" width="34" height="30" viewBox="0 0 34 30">
          <path d="M8 30 H28 C36 30 36 18 28 17 C26 4 12 4 11 14 C2 14 0 30 8 30 Z" fill="#eef2f5" />
          <path d="M11 14 C12 4 26 4 28 17 L18 16 Z" fill="#9aa7b2" />
        </svg>
        <svg className="ml-[30px]" width="34" height="30" viewBox="0 0 34 30">
          <path d="M8 30 H28 C36 30 36 18 28 17 C26 4 12 4 11 14 C2 14 0 30 8 30 Z" fill="#2aa5e8" />
          <path d="M11 14 C12 4 26 4 28 17 L16 20 Z" fill="#0b62b8" />
        </svg>
        <Mic className="ml-[27px] text-[#b9dde8]" size={38} strokeWidth={1.5} />
        <Wifi className="ml-[29px]" size={32} strokeWidth={2} />
        <Volume2 className="ml-[15px]" size={36} strokeWidth={1.6} />
        <svg className="ml-[12px]" width="34" height="26" viewBox="0 0 34 26" fill="none" stroke="#fff" strokeWidth="2.5">
          <rect x="2" y="2" width="27" height="22" rx="4" />
          <rect x="6" y="6" width="10" height="14" fill="#fff" stroke="none" />
          <rect x="31" y="9" width="3" height="8" fill="#fff" stroke="none" />
        </svg>
      </div>
      <div className="mb-[6px] ml-auto flex flex-col items-end text-[22px] leading-[32px] text-[#f0f0f0]">
        <span>5:28 PM</span>
        <span>8/1/2024</span>
      </div>
      <svg className="ml-[17px] mr-[40px]" width="30" height="42" viewBox="0 0 30 42">
        <path d="M4 32 C8 28 6 14 12 12 H18 C24 14 22 28 26 32 Z M11 36 H19 V39 H11 Z" fill="#eee" />
        <text x="15" y="26" textAnchor="middle" fontSize="12" fontWeight="700" fill="#2f4258" fontFamily="Open Sans, sans-serif">z</text>
        <text x="24" y="12" textAnchor="middle" fontSize="12" fontWeight="700" fill="#eee" fontFamily="Open Sans, sans-serif">z</text>
      </svg>
    </div>
  );
}

export default function App() {
  return (
    <div className="flex h-[1920px] w-[2880px] flex-col overflow-hidden bg-[#282828] font-['Open_Sans',sans-serif]">
      <TitleBar />
      <MenuBar />
      <Ribbon />
      <div className="flex h-[1394px] shrink-0 border-t-[3px] border-black bg-[#2d2d2d] pt-[4px]">
        <SideRail />
        <div className="flex w-[1696px] shrink-0 flex-col">
          <Canvas />
          <Outputs />
        </div>
        <SidePanel />
      </div>
      <StatusBar />
      <Taskbar />
    </div>
  );
}
